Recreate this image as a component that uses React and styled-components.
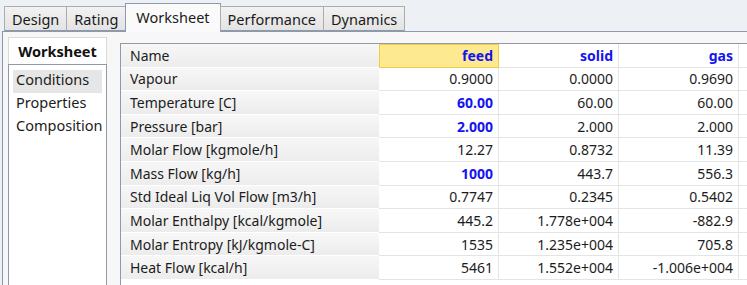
import React from "react";
import styled, { createGlobalStyle } from "styled-components";

const tabs = ["Design", "Rating", "Worksheet", "Performance", "Dynamics"];
const sideItems = ["Conditions", "Properties", "Composition"];
const streams = ["feed", "solid", "gas"];

// b = user specified value (blue bold)
const rows = [
  { name: "Vapour", v: ["0.9000", "0.0000", "0.9690"] },
  { name: "Temperature [C]", v: ["60.00", "60.00", "60.00"], b: [0] },
  { name: "Pressure [bar]", v: ["2.000", "2.000", "2.000"], b: [0] },
  { name: "Molar Flow [kgmole/h]", v: ["12.27", "0.8732", "11.39"] },
  { name: "Mass Flow [kg/h]", v: ["1000", "443.7", "556.3"], b: [0] },
  { name: "Std Ideal Liq Vol Flow [m3/h]", v: ["0.7747", "0.2345", "0.5402"] },
  { name: "Molar Enthalpy [kcal/kgmole]", v: ["445.2", "1.778e+004", "-882.9"] },
  { name: "Molar Entropy [kJ/kgmole-C]", v: ["1535", "1.235e+004", "705.8"] },
  { name: "Heat Flow [kcal/h]", v: ["5461", "1.552e+004", "-1.006e+004"] },
];

const App = () => {
  return (
    <Page>
      <GlobalStyle />
      <TabBar>
        {tabs.map((t) => (
          <Tab key={t} active={t === "Worksheet"}>
            {t}
          </Tab>
        ))}
      </TabBar>
      <Content>
        <Side>
          <SideHeader>Worksheet</SideHeader>
          <SideList>
            {sideItems.map((s, i) => (
              <SideItem key={s} selected={i === 0}>
                {s}
              </SideItem>
            ))}
          </SideList>
        </Side>
        <Table>
          <NameCell>Name</NameCell>
          {streams.map((s, i) => (
            <HeadCell key={s} current={i === 0}>
              {s}
            </HeadCell>
          ))}
          <Filler />
          {rows.map((r) => (
            <React.Fragment key={r.name}>
              <NameCell>{r.name}</NameCell>
              {r.v.map((val, i) => (
                <ValueCell key={i} spec={r.b && r.b.includes(i)}>
                  {val}
                </ValueCell>
              ))}
              <Filler />
            </React.Fragment>
          ))}
        </Table>
      </Content>
    </Page>
  );
};
export default App;

const GlobalStyle = createGlobalStyle`
  body {
    margin: 0;
    background: #edf0f4;
    font-family: "Noto Sans", "Open Sans", sans-serif;
    color: #1c1c1c;
  }
`;
const Page = styled.div`
  width: 747px;
  height: 285px;
  overflow: hidden;
  display: flex;
  flex-direction: column;
`;
const TabBar = styled.div`
  height: 31px;
  display: flex;
  align-items: flex-end;
  padding-left: 4px;
  position: relative;
  z-index: 1;
`;
const Tab = styled.div`
  box-sizing: border-box;
  height: ${(p) => (p.active ? "29px" : "25px")};
  margin-bottom: ${(p) => (p.active ? "-1px" : "0")};
  padding: ${(p) => (p.active ? "0 10px 2px" : "0 7px")};
  display: flex;
  align-items: center;
  font-size: 14.5px;
  color: #1a1a1a;
  border: 1px solid ${(p) => (p.active ? "#8e9aaa" : "#acacac")};
  border-bottom: ${(p) => (p.active ? "none" : "1px solid #8e9aaa")};
  margin-right: -1px;
  background: ${(p) =>
    p.active ? "#fafafa" : "linear-gradient(#f2f2f2, #e3e3e3)"};
`;
const Content = styled.div`
  flex: 1;
  display: flex;
  margin-left: 2px;
  border-top: 1px solid #8e9aaa;
  border-left: 1px solid #8e9aaa;
  background: #f7f7f7;
  padding: 5px 0 0 5px;
`;
const Side = styled.div`
  width: 99px;
  display: flex;
  flex-direction: column;
`;
const SideHeader = styled.div`
  height: 26px;
  background: #ffffff;
  border: 1px solid #dadada;
  border-bottom: none;
  display: flex;
  align-items: center;
  justify-content: center;
  font-size: 14.5px;
  font-weight: 700;
  color: #111;
`;
const SideList = styled.div`
  flex: 1;
  background: #ffffff;
  border: 1px solid #8e9aaa;
  border-bottom: none;
  padding: 5px 4px 0;
`;
const SideItem = styled.div`
  height: 23px;
  line-height: 19px;
  padding-left: 3px;
  font-size: 14.5px;
  background: ${(p) => (p.selected ? "#e6e6e6" : "transparent")};
  white-space: nowrap;
`;
const Table = styled.div`
  flex: 1;
  margin: 6px 0 0 13px;
  display: grid;
  grid-template-columns: 258px 120px 120px 120px 1fr;
  grid-auto-rows: 23.6px;
  align-content: start;
  border-top: 1px solid #8e9aaa;
  border-left: 1px solid #8e9aaa;
  background: #ffffff;
  font-size: 14px;
`;
const NameCell = styled.div`
  box-sizing: border-box;
  padding-left: 9px;
  display: flex;
  align-items: center;
  white-space: nowrap;
  background: linear-gradient(#f7f7f7, #ececec);
  border-bottom: 1px solid #ffffff;
`;
const ValueCell = styled.div`
  box-sizing: border-box;
  display: flex;
  align-items: center;
  justify-content: flex-end;
  padding-right: 5px;
  border-right: 1px solid #e4e4e4;
  border-bottom: 1px solid #e4e4e4;
  color: ${(p) => (p.spec ? "#1414f0" : "#1c1c1c")};
  font-weight: ${(p) => (p.spec ? 700 : 400)};
`;
const HeadCell = styled(ValueCell)`
  color: #1414f0;
  font-weight: 700;
  background: ${(p) => (p.current ? "#fdea90" : "#ffffff")};
  border: ${(p) => (p.current ? "1px solid #f0cc48" : undefined)};
`;
const Filler = styled.div`
  border-bottom: 1px solid #e4e4e4;
`;
